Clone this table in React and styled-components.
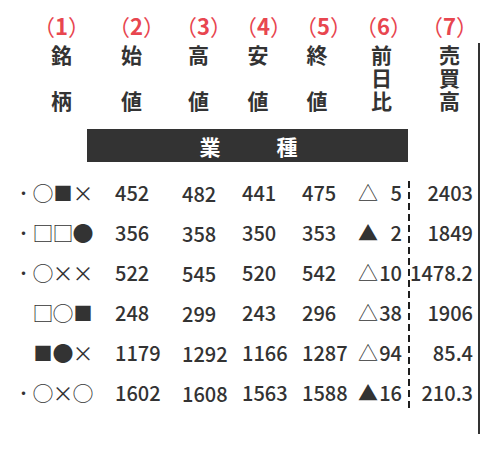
import React from "react";
import styled, { createGlobalStyle } from "styled-components";

// column widths and the shift of each heading inside its column
const COLS = [
  { w: 108, pl: 15, pr: 0 },
  { w: 67, pl: 0, pr: 20 },
  { w: 60, pl: 0, pr: 13 },
  { w: 60, pl: 0, pr: 14 },
  { w: 55, pl: 0, pr: 11 },
  { w: 58, pl: 5, pr: 0 },
  { w: 70, pl: 13, pr: 0 },
];

const HEADS = ["銘柄", "始値", "高値", "安値", "終値", "前日比", "売買高"];

const ROWS = [
  { dot: true, marks: "○■×", open: 452, high: 482, low: 441, close: 475, tri: "△", diff: 5, vol: "2403" },
  { dot: true, marks: "□□●", open: 356, high: 358, low: 350, close: 353, tri: "▲", diff: 2, vol: "1849" },
  { dot: true, marks: "○××", open: 522, high: 545, low: 520, close: 542, tri: "△", diff: 10, vol: "1478.2" },
  { dot: false, marks: "□○■", open: 248, high: 299, low: 243, close: 296, tri: "△", diff: 38, vol: "1906" },
  { dot: false, marks: "■●×", open: 1179, high: 1292, low: 1166, close: 1287, tri: "△", diff: 94, vol: "85.4" },
  { dot: true, marks: "○×○", open: 1602, high: 1608, low: 1563, close: 1588, tri: "▲", diff: 16, vol: "210.3" },
];

export default function App() {
  return (
    <>
      <GlobalStyle />
      <Page>
        <Labels>
          {COLS.map((c, i) => (
            <Label key={i} $pl={c.pl} $pr={c.pr}>
              <Paren>（</Paren>
              {i + 1}
              <Paren>）</Paren>
            </Label>
          ))}
        </Labels>

        <Frame>
          <HeadRow>
            {HEADS.map((h, i) => (
              <HeadCell key={h} $pl={COLS[i].pl} $pr={COLS[i].pr}>
                {h.split("").map((ch, j) => (
                  <HeadChar key={j}>{ch}</HeadChar>
                ))}
              </HeadCell>
            ))}
          </HeadRow>

          <Bar>
            <span>業</span>
            <span>種</span>
          </Bar>

          <Body>
            <Rows>
              {ROWS.map((r, i) => (
                <React.Fragment key={i}>
                  <MarkCell>
                    <Dot $show={r.dot}>・</Dot>
                    {r.marks.split("").map((m, j) => (
                      <Mark key={j} $small={m === "■"}>{m}</Mark>
                    ))}
                  </MarkCell>
                  <Num>{r.open}</Num>
                  <Num $dy={3}>{r.high}</Num>
                  <Num>{r.low}</Num>
                  <Num>{r.close}</Num>
                  <Change>
                    <Tri>{r.tri}</Tri>
                    <span>{r.diff}</span>
                  </Change>
                </React.Fragment>
              ))}
            </Rows>
            <Volume>
              {ROWS.map((r, i) => (
                <VolCell key={i}>{r.vol}</VolCell>
              ))}
            </Volume>
          </Body>
        </Frame>
      </Page>
    </>
  );
}

const GlobalStyle = createGlobalStyle`
  body {
    margin: 0;
    background: #fff;
    color: #333;
    font-family: "Noto Sans CJK JP", "Noto Sans", sans-serif;
  }
`;

const Page = styled.div`
  width: 500px;
  height: 458px;
`;

const template = COLS.map((c) => `${c.w}px`).join(" ");

const Labels = styled.div`
  display: grid;
  grid-template-columns: ${template};
  height: 43px;
  padding-top: 14px;
  box-sizing: border-box;
`;

const Label = styled.div`
  padding-left: ${(p) => p.$pl}px;
  padding-right: ${(p) => p.$pr}px;
  text-align: center;
  color: #e8464f;
  font-size: 22px;
  font-weight: 700;
  line-height: 22px;
  white-space: nowrap;
`;

const Paren = styled.span`
  font-weight: 400;
`;

const Frame = styled.div`
  width: 478px;
  border-right: 2px solid #333;
  display: flex;
  flex-direction: column;
`;

const HeadRow = styled.div`
  display: grid;
  grid-template-columns: ${template};
`;

const HeadCell = styled.div`
  height: 69px;
  padding-left: ${(p) => p.$pl}px;
  padding-right: ${(p) => p.$pr}px;
  display: flex;
  flex-direction: column;
  justify-content: space-between;
  align-items: center;
  font-size: 21px;
  font-weight: 700;
`;

const HeadChar = styled.span`
  display: block;
  height: 23px;
  line-height: 23px;
  overflow: visible;
`;

const Bar = styled.div`
  margin: 17px 0 0 87px;
  width: 321px;
  height: 33px;
  background: #333;
  color: #fff;
  display: flex;
  justify-content: center;
  align-items: center;
  gap: 56px;
  font-size: 21px;
  font-weight: 700;
  padding-left: 2px;
  box-sizing: border-box;
`;

const Body = styled.div`
  display: flex;
  margin-top: 10px;
  padding-bottom: 22px;
`;

const Rows = styled.div`
  display: grid;
  grid-template-columns: ${COLS.slice(0, 6).map((c) => `${c.w}px`).join(" ")};
  grid-auto-rows: 40px;
`;

const MarkCell = styled.div`
  display: flex;
  align-items: center;
  padding-left: 14px;
  font-size: 21px;
  font-weight: 400;
`;

const Dot = styled.span`
  width: 19px;
  text-align: center;
  font-size: 16px;
  visibility: ${(p) => (p.$show ? "visible" : "hidden")};
`;

const Mark = styled.span`
  width: 20px;
  display: flex;
  justify-content: center;
  line-height: 1;
  font-size: ${(p) => (p.$small ? 19 : 21)}px;
`;

const Num = styled.div`
  display: flex;
  align-items: center;
  padding-left: 7px;
  padding-top: ${(p) => p.$dy || 0}px;
  font-size: 20px;
  font-weight: 500;
  white-space: nowrap;
`;

const Change = styled.div`
  display: flex;
  align-items: center;
  justify-content: space-between;
  padding: 0 6px 0 8px;
  font-size: 20px;
  font-weight: 500;
`;

const Tri = styled.span`
  font-weight: 400;
  font-size: 20px;
`;

const Volume = styled.div`
  width: 70px;
  display: flex;
  flex-direction: column;
  background: repeating-linear-gradient(to bottom, #1e1e1e 0 7px, transparent 7px 11px) 0 9px / 2px 252px no-repeat;
`;

const VolCell = styled.div`
  height: 40px;
  display: flex;
  align-items: center;
  justify-content: flex-end;
  padding-right: 5px;
  font-size: 20px;
  font-weight: 500;
`;
